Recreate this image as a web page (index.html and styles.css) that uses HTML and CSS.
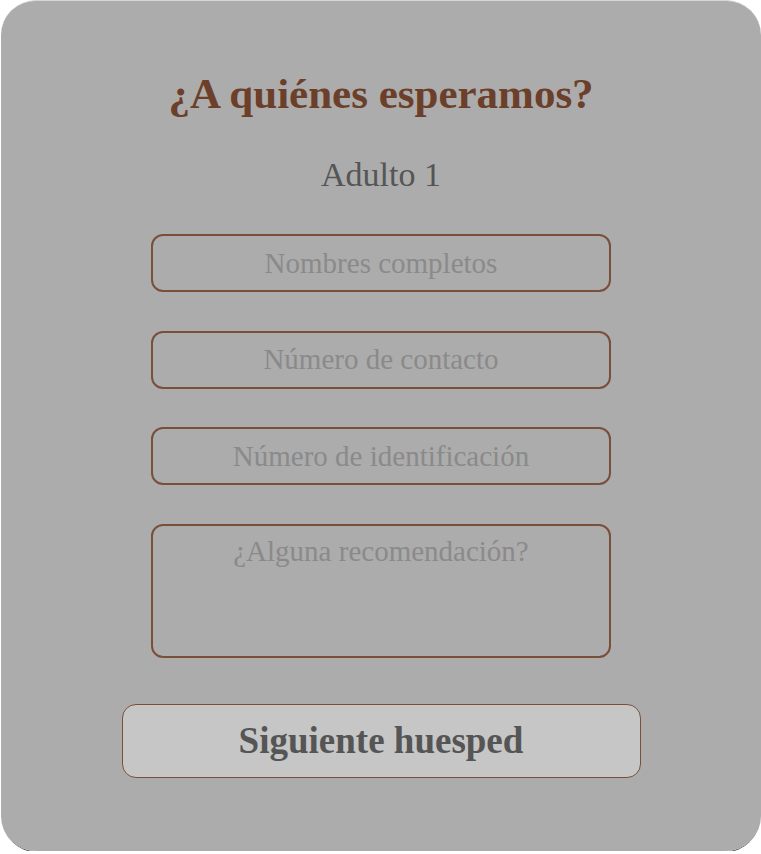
FILE: index.html
```html
<!DOCTYPE html>
<html lang="es">
<head>
<meta charset="utf-8">
<title>¿A quiénes esperamos?</title>
<link rel="stylesheet" href="styles.css">
</head>
<body>
<main class="card">
  <h1 class="title">¿A quiénes esperamos?</h1>
  <h2 class="subtitle">Adulto 1</h2>
  <form class="form">
    <input class="field" type="text" placeholder="Nombres completos">
    <input class="field" type="text" placeholder="Número de contacto">
    <input class="field" type="text" placeholder="Número de identificación">
    <textarea class="field area" placeholder="¿Alguna recomendación?"></textarea>
    <button class="next" type="button">Siguiente huesped</button>
  </form>
</main>
</body>
</html>
```
FILE: styles.css
```css
html, body {
  margin: 0;
  padding: 0;
  background: #ffffff;
}
body {
  padding: 0 0 0 1px;
  font-family: "Liberation Serif", "Times New Roman", serif;
}
.card {
  box-sizing: border-box;
  height: 851px;
  background: #acacac;
  border-top: 1px solid #d6d6d6;
  border-radius: 35px;
  box-shadow: 0 1px 0 -1px #ffffff, 0 3px 0 -2px #4a4a4a;
  display: flex;
  flex-direction: column;
  align-items: center;
  padding-top: 68px;
}
.title {
  margin: 0;
  font-size: 43px;
  line-height: 50px;
  font-weight: 700;
  color: #6b3f2a;
}
.subtitle {
  margin: 36px 0 0 0;
  font-size: 34px;
  line-height: 40px;
  font-weight: 400;
  color: #555555;
}
.form {
  margin-top: 39px;
  display: flex;
  flex-direction: column;
  align-items: center;
}
.field {
  box-sizing: border-box;
  width: 460px;
  height: 58px;
  margin: 0 0 38.5px 0;
  padding: 0 12px;
  background: transparent;
  border: 2px solid #7a4f3a;
  border-radius: 12px;
  font-family: "Liberation Serif", "Times New Roman", serif;
  font-size: 29px;
  line-height: 32px;
  color: #555555;
  text-align: center;
  outline: none;
}
.field::placeholder {
  color: #8a8a8a;
  opacity: 1;
}
.area {
  height: 134px;
  padding-top: 9px;
  margin-bottom: 46px;
  resize: none;
  display: block;
}
.next {
  box-sizing: border-box;
  width: 519px;
  height: 74px;
  background: #c6c6c6;
  border: 1.5px solid #7a4f3a;
  border-radius: 14px;
  font-family: "Liberation Serif", "Times New Roman", serif;
  font-size: 37px;
  font-weight: 700;
  color: #555555;
  padding: 0;
}
```
